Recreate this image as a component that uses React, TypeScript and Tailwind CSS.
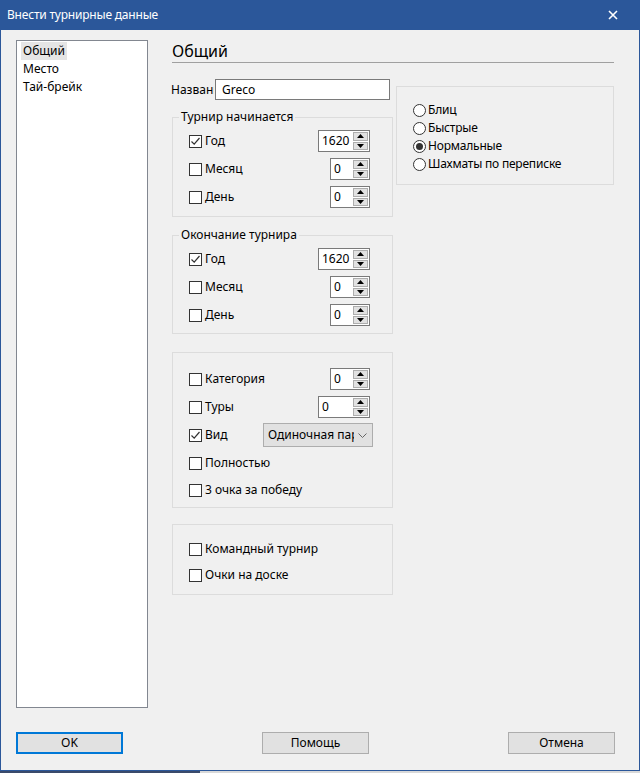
import React from "react";

const Check = ({ checked = false }: { checked?: boolean }) => (
  <div className="w-[13px] h-[13px] border border-[#333333] bg-white flex items-center justify-center shrink-0">
    {checked && (
      <svg width="11" height="11" viewBox="0 0 11 11">
        <path d="M1.5 5.5 L4.2 8.2 L9.5 2" fill="none" stroke="#333333" strokeWidth="1.2" />
      </svg>
    )}
  </div>
);

const Radio = ({ checked = false }: { checked?: boolean }) => (
  <div className="w-[13px] h-[13px] rounded-full border border-[#333333] bg-white flex items-center justify-center shrink-0">
    {checked && <div className="w-[7px] h-[7px] rounded-full bg-[#333333]" />}
  </div>
);

const Arrow = ({ up }: { up?: boolean }) => (
  <div className="flex-1 bg-[#e1e1e1] border border-[#adadad] flex items-center justify-center">
    <svg width="7" height="4" viewBox="0 0 7 4">
      {up ? <path d="M0 4 L3.5 0 L7 4 Z" fill="#000" /> : <path d="M0 0 L3.5 4 L7 0 Z" fill="#000" />}
    </svg>
  </div>
);

const Spin = ({ value, wide }: { value: string; wide?: boolean }) => (
  <div className={`h-[22px] border border-[#7a7a7a] bg-white flex ${wide ? "w-[52px]" : "w-[40px]"}`}>
    <div className="flex-1 pl-[3px] leading-[20px]">{value}</div>
    <div className="w-[16px] flex flex-col gap-[1px] py-[1px] pr-[1px]">
      <Arrow up />
      <Arrow />
    </div>
  </div>
);

const Row = ({
  label,
  checked,
  children,
  h = "h-[28px]",
  mr = "mr-[22px]",
}: {
  label: string;
  checked?: boolean;
  children?: React.ReactNode;
  h?: string;
  mr?: string;
}) => (
  <div className={`flex items-center pl-[16px] ${h}`}>
    <Check checked={checked} />
    <span className="ml-[3px] text-[#000]">{label}</span>
    {children && <div className={`ml-auto ${mr}`}>{children}</div>}
  </div>
);

const Group = ({
  legend,
  className = "",
  children,
}: {
  legend?: string;
  className?: string;
  children: React.ReactNode;
}) => (
  <div className={`relative border border-[#dcdcdc] ${className}`}>
    {legend && (
      <span className="absolute left-[6px] -top-[9px] px-[2px] bg-[#f0f0f0] leading-[16px]">{legend}</span>
    )}
    {children}
  </div>
);

const Button = ({ label, primary }: { label: string; primary?: boolean }) => (
  <div
    className={`w-[107px] h-[22px] flex items-center justify-center bg-[#e1e1e1] ${
      primary ? "border-2 border-[#0078d7]" : "border border-[#adadad]"
    }`}
  >
    {label}
  </div>
);

export default function App() {
  return (
    <div className="w-[640px] h-[773px] flex flex-col font-['Noto_Sans',sans-serif] text-[12px] text-black">
      <div className="h-[771px] flex flex-col bg-[#f0f0f0] border-x border-b border-[#2b579a]">
        <div className="h-[30px] bg-[#2b579a] flex items-center justify-between pl-[6px] pr-[21px] text-white">
          <span className="text-[12px] tracking-[-0.2px]">Внести турнирные данные</span>
          <svg width="10" height="10" viewBox="0 0 10 10">
            <path d="M1 1 L9 9 M9 1 L1 9" stroke="#fff" strokeWidth="1.6" />
          </svg>
        </div>

        <div className="flex pl-[15px] pt-[10px]">
          <div className="w-[132px] h-[668px] bg-white border border-[#828790] pl-[4px] pt-[1px] leading-[18px]">
            <div className="inline-block bg-[#e5e5e5] px-[2px]">Общий</div>
            <div className="px-[2px]">Место</div>
            <div className="px-[2px]">Тай-брейк</div>
          </div>

          <div className="ml-[24px] w-[442px] flex flex-col">
            <div className="h-[23px] border-b border-[#a0a0a0] text-[16px] leading-[20px] pt-[1px]">Общий</div>

            <div className="flex">
              <div className="w-[221px] flex flex-col">
                <div className="flex items-center mt-[16px] -ml-[1px]">
                  <span className="w-[43px] overflow-hidden whitespace-nowrap">Названи</span>
                  <div className="ml-[1px] w-[175px] h-[21px] border border-[#7a7a7a] bg-white pl-[6px] leading-[19px]">Greco</div>
                </div>

                <Group legend="Турнир начинается" className="mt-[17px] pt-[9px] pb-[5px]">
                  <Row label="Год" checked>
                    <Spin value="1620" wide />
                  </Row>
                  <Row label="Месяц">
                    <Spin value="0" />
                  </Row>
                  <Row label="День">
                    <Spin value="0" />
                  </Row>
                </Group>

                <Group legend="Окончание турнира" className="mt-[18px] pt-[9px] pb-[4px]">
                  <Row label="Год" checked>
                    <Spin value="1620" wide />
                  </Row>
                  <Row label="Месяц">
                    <Spin value="0" />
                  </Row>
                  <Row label="День">
                    <Spin value="0" />
                  </Row>
                </Group>

                <Group className="mt-[18px] pt-[12px] pb-[4px]">
                  <Row label="Категория">
                    <Spin value="0" />
                  </Row>
                  <Row label="Туры">
                    <Spin value="0" wide />
                  </Row>
                  <Row label="Вид" checked mr="mr-[19px]">
                    <div className="w-[110px] h-[24px] bg-[#e1e1e1] border border-[#adadad] flex items-center pl-[4px] pr-[5px]">
                      <span className="flex-1 overflow-hidden whitespace-nowrap">Одиночная партия</span>
                      <svg width="9" height="5" viewBox="0 0 9 5" className="ml-[4px] shrink-0">
                        <path d="M0.5 0.5 L4.5 4.5 L8.5 0.5" fill="none" stroke="#666" strokeWidth="1" />
                      </svg>
                    </div>
                  </Row>
                  <Row label="Полностью" />
                  <Row label="3 очка за победу" h="h-[26px]" />
                </Group>

                <Group className="mt-[16px] pt-[11px] pb-[6px]">
                  <Row label="Командный турнир" h="h-[26px]" />
                  <Row label="Очки на доске" h="h-[26px]" />
                </Group>
              </div>

              <div className="ml-[3px] mt-[23px] w-[218px] self-start">
                <Group className="pt-[14px] pb-[11px]">
                  {[
                    ["Блиц", false],
                    ["Быстрые", false],
                    ["Нормальные", true],
                    ["Шахматы по переписке", false],
                  ].map(([label, on]) => (
                    <div key={label as string} className="h-[18px] flex items-center pl-[16px]">
                      <Radio checked={on as boolean} />
                      <span className="ml-[2px] tracking-[-0.2px]">{label as string}</span>
                    </div>
                  ))}
                </Group>
              </div>
            </div>
          </div>
        </div>

        <div className="mt-[24px] pl-[15px] pr-[24px] flex justify-between">
          <Button label="OK" primary />
          <Button label="Помощь" />
          <Button label="Отмена" />
        </div>
      </div>
      <div className="h-[2px] flex">
        <div className="w-[200px] bg-[#3a4a6a]" />
        <div className="flex-1 bg-[#d9d9d9]" />
      </div>
    </div>
  );
}
